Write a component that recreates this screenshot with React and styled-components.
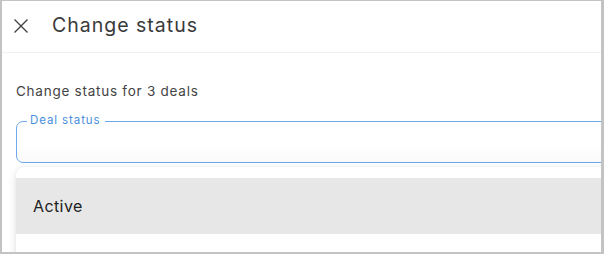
import React from "react";
import styled, { createGlobalStyle } from "styled-components";

const GlobalStyle = createGlobalStyle`
  html, body {
    margin: 0;
    padding: 0;
    background: #ffffff;
  }
  body {
    font-family: Inter, "Noto Sans", sans-serif;
    -webkit-font-smoothing: antialiased;
  }
`;

const Frame = styled.div`
  position: relative;
  box-sizing: border-box;
  width: 604px;
  height: 254px;
  border-style: solid;
  border-color: #c3c3c3;
  border-width: 1px 3px 2px 2px;
  background: #fff;
  overflow: hidden;
`;

const Header = styled.header`
  box-sizing: border-box;
  display: flex;
  align-items: center;
  height: 52px;
  padding: 0 0 3px 10px;
  border-bottom: 1px solid #f0f0f0;
`;

const CloseButton = styled.button`
  display: flex;
  align-items: center;
  justify-content: center;
  width: 18px;
  height: 18px;
  margin: 2px 22px 0 0;
  padding: 0;
  border: 0;
  background: none;
  color: #3f3f3f;
  cursor: pointer;
`;

const Title = styled.h1`
  margin: 0;
  font-size: 19.5px;
  font-weight: 400;
  color: #3a3a3a;
  letter-spacing: 1px;
`;

const Body = styled.section`
  padding: 28px 0 0 14px;
`;

const Hint = styled.p`
  margin: 0;
  font-size: 13.5px;
  line-height: 20px;
  color: #444;
  letter-spacing: 0.75px;
`;

const Field = styled.div`
  position: relative;
  box-sizing: border-box;
  height: 42.5px;
  margin: 19.5px -12px 0 0;
  border: 1.5px solid #6ea9ee;
  border-radius: 7px;
  background: linear-gradient(to bottom, #fff 60%, #f9f9f9 100%);
`;

const FieldLabel = styled.label`
  position: absolute;
  top: -9px;
  left: 10px;
  padding: 0 5px 0 3px;
  background: #fff;
  font-size: 11.5px;
  line-height: 15px;
  color: #4a8fe0;
  letter-spacing: 0.9px;
`;

const Menu = styled.ul`
  position: absolute;
  top: 166px;
  left: 14px;
  right: -12px;
  bottom: -20px;
  margin: 0;
  padding: 11px 0 0;
  list-style: none;
  background: #fff;
  border-radius: 8px;
  box-shadow: 0 2px 8px rgba(0, 0, 0, 0.12), 0 0 2px rgba(0, 0, 0, 0.06);
`;

const Option = styled.li`
  display: flex;
  align-items: center;
  height: 56px;
  padding-left: 17px;
  font-size: 16px;
  color: #222;
  letter-spacing: 0.4px;
  background: ${(p) => (p.$selected ? "#e7e7e7" : "#fff")};
`;

function CloseIcon() {
  return (
    <svg width="18" height="18" viewBox="0 0 24 24" fill="none">
      <path
        d="M4 4 L20 20 M20 4 L4 20"
        stroke="currentColor"
        strokeWidth="1.7"
        strokeLinecap="square"
      />
    </svg>
  );
}

export default function App() {
  return (
    <>
      <GlobalStyle />
      <Frame>
        <Header>
          <CloseButton aria-label="Close">
            <CloseIcon />
          </CloseButton>
          <Title>Change status</Title>
        </Header>
        <Body>
          <Hint>Change status for 3 deals</Hint>
          <Field>
            <FieldLabel>Deal status</FieldLabel>
          </Field>
        </Body>
        <Menu>
          <Option $selected>Active</Option>
          <Option />
        </Menu>
      </Frame>
    </>
  );
}
